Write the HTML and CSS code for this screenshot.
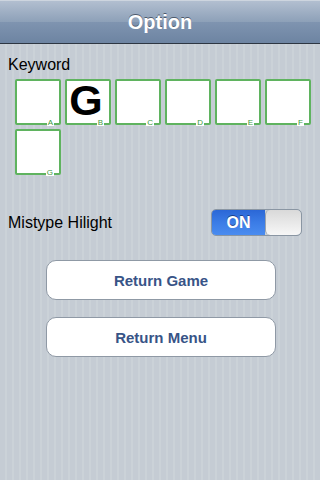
FILE: index.html
```html
<!DOCTYPE html>
<html>
<head>
<meta charset="utf-8">
<link rel="stylesheet" href="styles.css">
</head>
<body>
<div class="navbar"><span class="title">Option</span></div>
<div class="content">
  <div class="label keyword">Keyword</div>
  <div class="grid">
    <div class="box"><span class="tag">A</span></div>
    <div class="box"><span class="big">G</span><span class="tag">B</span></div>
    <div class="box"><span class="tag">C</span></div>
    <div class="box"><span class="tag">D</span></div>
    <div class="box"><span class="tag">E</span></div>
    <div class="box"><span class="tag">F</span></div>
    <div class="box"><span class="tag">G</span></div>
  </div>
  <div class="row">
    <div class="label">Mistype Hilight</div>
    <div class="switch"><div class="on">ON</div><div class="knob"></div></div>
  </div>
  <div class="buttons">
    <div class="btn">Return Game</div>
    <div class="btn">Return Menu</div>
  </div>
</div>
</body>
</html>
```
FILE: styles.css
```css
html, body {
  margin: 0;
  padding: 0;
}
body {
  width: 320px;
  height: 480px;
  overflow: hidden;
  font-family: "Liberation Sans", Arial, sans-serif;
  background: repeating-linear-gradient(90deg, #c5ccd4 0, #c5ccd4 5px, #cbd2d8 5px, #cbd2d8 7px);
}
.navbar {
  box-sizing: border-box;
  height: 44px;
  border-top: 1px solid #cdd5df;
  border-bottom: 1px solid #2d3642;
  background: linear-gradient(#b2bfd0 0, #8da0b8 50%, #7f94b0 50%, #6d84a2 100%);
  display: flex;
  align-items: center;
  justify-content: center;
}
.title {
  color: #fff;
  font-weight: bold;
  font-size: 20px;
  text-shadow: 0 -1px 0 #4d5a6d;
}
.content {
  padding: 0 8px;
}
.label {
  font-size: 16px;
  color: #000;
}
.keyword {
  margin-top: 12px;
  line-height: 18px;
}
.grid {
  margin-top: 5px;
  padding-left: 7px;
  display: grid;
  grid-template-columns: repeat(6, 46px);
  grid-auto-rows: 46px;
  column-gap: 4px;
  row-gap: 4px;
}
.box {
  position: relative;
  background: #fff;
  border: 2px solid #5fb35f;
  border-radius: 2px;
  box-sizing: border-box;
  display: flex;
  align-items: center;
  justify-content: center;
}
.big {
  font-size: 43px;
  font-weight: bold;
  line-height: 31px;
  height: 31px;
  color: #000;
  margin-top: -4px;
  margin-right: 4px;
}
.tag {
  position: absolute;
  right: 5px;
  bottom: -3px;
  font-size: 8px;
  line-height: 7px;
  color: #3c9a3c;
  background: #fff;
  padding: 0 1px;
}
.row {
  margin-top: 35px;
  display: flex;
  align-items: center;
  justify-content: space-between;
  padding-right: 10px;
}
.switch {
  width: 91px;
  height: 27px;
  margin-top: -1px;
  border-radius: 5px;
  border: 1px solid #8a96a3;
  box-sizing: border-box;
  display: flex;
  overflow: hidden;
}
.on {
  width: 53px;
  background: linear-gradient(#2b67d6 0, #3b7ce6 50%, #4a8cf0 100%);
  color: #fff;
  font-weight: bold;
  font-size: 16px;
  display: flex;
  align-items: center;
  justify-content: center;
  text-shadow: 0 -1px 0 #1b3f8a;
}
.knob {
  flex: 1;
  background: linear-gradient(#d9d9d9, #f7f7f7);
  border-left: 1px solid #9aa3ad;
  border-radius: 5px;
}
.buttons {
  margin-top: 24px;
  padding-left: 2px;
  display: flex;
  flex-direction: column;
  align-items: center;
  gap: 17px;
}
.btn {
  width: 230px;
  height: 40px;
  box-sizing: border-box;
  background: #fff;
  border: 1px solid #8f99a5;
  border-radius: 10px;
  display: flex;
  align-items: center;
  justify-content: center;
  color: #385487;
  font-weight: bold;
  font-size: 15px;
}
```
